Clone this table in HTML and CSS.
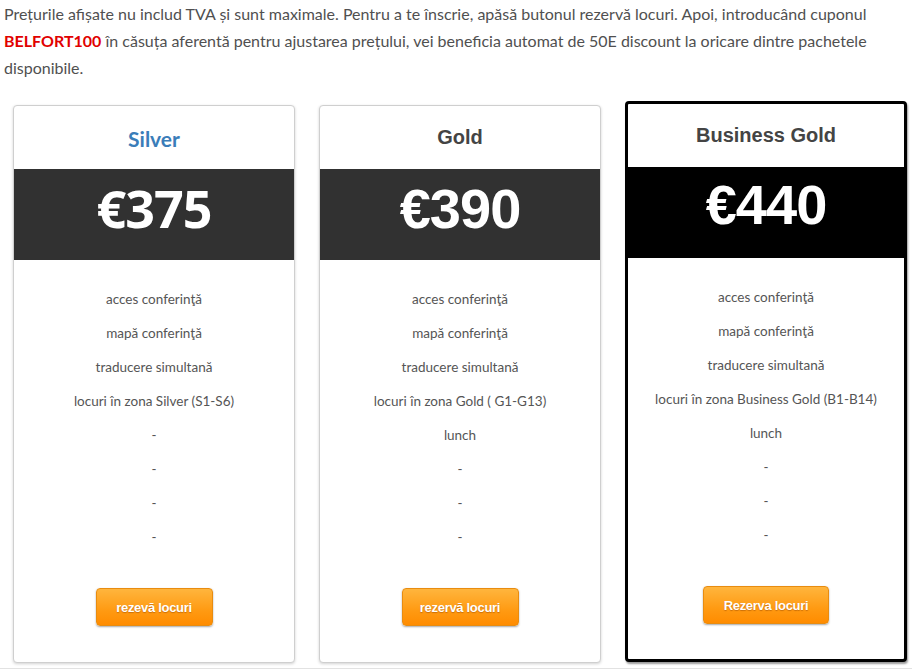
FILE: index.html
```html
<!DOCTYPE html>
<html lang="ro">
<head>
<meta charset="utf-8">
<link rel="stylesheet" href="styles.css">
</head>
<body>
<p class="intro">Prețurile afișate nu includ TVA și sunt maximale. Pentru a te înscrie, apăsă butonul rezervă locuri. Apoi, introducând cuponul <strong class="code">BELFORT100</strong> în căsuța aferentă pentru ajustarea prețului, vei beneficia automat de 50E discount la oricare dintre pachetele disponibile.</p>

<div class="plans">
  <div class="plan">
    <div class="plan-head"><h3 class="title title-silver">Silver</h3></div>
    <div class="price price-sans">€375</div>
    <ul class="features">
      <li>acces conferinţă</li>
      <li>mapă conferinţă</li>
      <li>traducere simultană</li>
      <li>locuri în zona Silver (S1-S6)</li>
      <li>-</li>
      <li>-</li>
      <li>-</li>
      <li>-</li>
    </ul>
    <div class="btn-row"><a class="btn">rezevă locuri</a></div>
  </div>

  <div class="plan">
    <div class="plan-head"><h3 class="title">Gold</h3></div>
    <div class="price">€390</div>
    <ul class="features">
      <li>acces conferinţă</li>
      <li>mapă conferinţă</li>
      <li>traducere simultană</li>
      <li>locuri în zona Gold ( G1-G13)</li>
      <li>lunch</li>
      <li>-</li>
      <li>-</li>
      <li>-</li>
    </ul>
    <div class="btn-row"><a class="btn">rezervă locuri</a></div>
  </div>

  <div class="plan plan-featured">
    <div class="plan-head"><h3 class="title">Business Gold</h3></div>
    <div class="price price-black">€440</div>
    <ul class="features">
      <li>acces conferinţă</li>
      <li>mapă conferinţă</li>
      <li>traducere simultană</li>
      <li>locuri în zona Business Gold (B1-B14)</li>
      <li>lunch</li>
      <li>-</li>
      <li>-</li>
      <li>-</li>
    </ul>
    <div class="btn-row"><a class="btn btn-wide">Rezerva locuri</a></div>
  </div>
</div>
<div class="rule"></div>
</body>
</html>
```

FILE: styles.css
```css
html, body {
  margin: 0;
  padding: 0;
  background: #fff;
}
body {
  padding: 0 4px;
  font-family: Lato, "Open Sans", sans-serif;
  color: #555;
}
.intro {
  margin: 0;
  font-size: 16px;
  line-height: 27px;
  color: #505050;
  width: 880px;
}
.code {
  color: #e10000;
  font-weight: 700;
}
.plans {
  display: flex;
  align-items: flex-start;
  gap: 24px;
  margin: 24px 0 0 9px;
}
.plan {
  box-sizing: border-box;
  width: 282px;
  border: 1px solid #cfcfcf;
  border-radius: 4px;
  box-shadow: 0 1px 3px rgba(0,0,0,0.18);
  background: #fff;
  display: flex;
  flex-direction: column;
  padding-bottom: 36px;
}
.plan-featured {
  border: 3px solid #000;
  margin-top: -4px;
  padding-bottom: 35px;
  box-shadow: 1px 2px 2px rgba(0,0,0,0.4);
}
.plan-head {
  height: 63px;
  display: flex;
  align-items: center;
  justify-content: center;
}
.title {
  margin: 0;
  font-family: "Liberation Sans", Arial, sans-serif;
  font-weight: 700;
  font-size: 20px;
  color: #444;
}
.title-silver {
  font-family: Lato, sans-serif;
  font-size: 21px;
  color: #3a7db9;
  padding-top: 1px;
}
.price {
  box-sizing: border-box;
  height: 91px;
  padding-bottom: 12px;
  background: #313131;
  color: #fff;
  display: flex;
  align-items: center;
  justify-content: center;
  font-family: "Liberation Sans", Arial, sans-serif;
  font-weight: 700;
  font-size: 56px;
  letter-spacing: -1px;
}
.price-sans {
  font-family: "Open Sans", sans-serif;
  font-size: 52px;
  letter-spacing: -1px;
  padding-bottom: 14px;
}
.price-black {
  background: #000;
  padding-bottom: 16px;
}
.features {
  list-style: none;
  margin: 0;
  padding: 22px 0 0;
  text-align: center;
  font-size: 13.5px;
  line-height: 34px;
  color: #555;
}
.btn-row {
  display: flex;
  justify-content: center;
  margin-top: 34px;
}
.btn {
  box-sizing: border-box;
  width: 117px;
  height: 38px;
  display: flex;
  align-items: center;
  justify-content: center;
  border: 1px solid #e88c10;
  border-radius: 4px;
  background: linear-gradient(#ffb53d, #ff9a12 60%, #ff8c00);
  box-shadow: 0 1px 2px rgba(0,0,0,0.35);
  color: #fff;
  font-family: "Liberation Sans", Arial, sans-serif;
  font-weight: 700;
  font-size: 13px;
  letter-spacing: -0.3px;
  text-shadow: 0 1px 1px rgba(150,70,0,0.5);
  cursor: pointer;
}
.btn-wide {
  width: 126px;
}
.rule {
  margin: 5px -4px 0;
  height: 1px;
  background: #e2e2e2;
}
```
